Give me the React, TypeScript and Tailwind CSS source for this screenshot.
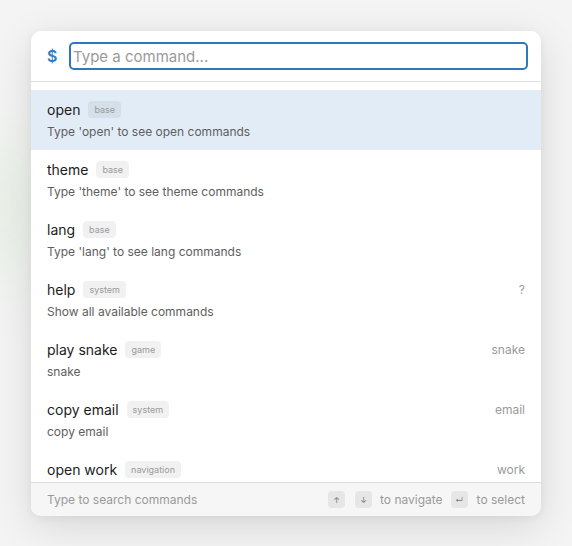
import React from "react";

type Cmd = { title: string; badge: string; desc?: string; right?: string };

const cmds: Cmd[] = [
  { title: "open", badge: "base", desc: "Type 'open' to see open commands" },
  { title: "theme", badge: "base", desc: "Type 'theme' to see theme commands" },
  { title: "lang", badge: "base", desc: "Type 'lang' to see lang commands" },
  { title: "help", badge: "system", desc: "Show all available commands", right: "?" },
  { title: "play snake", badge: "game", desc: "snake", right: "snake" },
  { title: "copy email", badge: "system", desc: "copy email", right: "email" },
  { title: "open work", badge: "navigation", right: "work" },
];

function Kbd({ children }: { children: React.ReactNode }) {
  return (
    <span className="flex h-[17px] w-[17px] items-center justify-center rounded-[4px] bg-[#e6e6e6] text-[8px] leading-none text-[#777]">
      {children}
    </span>
  );
}

export default function App() {
  return (
    <div
      className="relative min-h-[546px] w-[572px] overflow-hidden bg-[#f4f4f4] pl-[31px] pt-[31px]"
      style={{ fontFamily: "Inter, 'Noto Sans', sans-serif" }}
    >
      <div className="pointer-events-none absolute left-[-60px] top-[150px] h-[120px] w-[100px] rounded-full bg-[#e4efe2] blur-2xl" />
      <div className="relative flex h-[485px] w-[510px] flex-col overflow-hidden rounded-[10px] bg-white shadow-[0_10px_40px_rgba(0,0,0,0.12),0_2px_8px_rgba(0,0,0,0.05)]">
        <div className="flex h-[51px] shrink-0 items-center gap-[13px] border-b border-[#e2e2e2] pl-4 pr-[13px]">
          <span className="w-[9px] text-[16px] font-semibold leading-none text-[#2d7cc6]">$</span>
          <div className="flex h-[28px] flex-1 items-center rounded-[5px] border-2 border-[#2f77bd] px-[2px]">
            <span className="text-[15px] leading-none text-[#9a9a9a]">Type a command...</span>
          </div>
        </div>
        <div className="flex-1 overflow-hidden pt-[8px]">
          {cmds.map((c, i) => (
            <div
              key={c.title}
              className={
                "flex h-[60px] shrink-0 flex-col px-4 pt-[9px] " +
                (i === 0 ? "bg-[#e2ecf7]" : "bg-white")
              }
            >
              <div className="flex h-[21px] items-center">
                <span className="text-[14px] leading-[21px] text-[#1c1c1c]">{c.title}</span>
                <span className="ml-[8px] flex h-[17px] items-center rounded-[4px] bg-[rgba(0,0,0,0.055)] px-[6px] text-[9px] leading-none text-[#9a9a9a]">
                  {c.badge}
                </span>
                {c.right && (
                  <span className="ml-auto text-[12px] leading-none text-[#9a9a9a]">{c.right}</span>
                )}
              </div>
              {c.desc && (
                <div className="mt-[4px] text-[12px] leading-[16px] text-[#5e5e5e]">{c.desc}</div>
              )}
            </div>
          ))}
        </div>
        <div className="flex h-[34px] shrink-0 items-center justify-between border-t border-[#dcdcdc] bg-[#f6f6f6] px-4 text-[12px] text-[#9a9a9a]">
          <span>Type to search commands</span>
          <div className="flex items-center">
            <Kbd>↑</Kbd>
            <span className="ml-[10px]" />
            <Kbd>↓</Kbd>
            <span className="ml-[8px]">to navigate</span>
            <span className="ml-[8px]" />
            <Kbd>↵</Kbd>
            <span className="ml-[9px]">to select</span>
          </div>
        </div>
      </div>
    </div>
  );
}
